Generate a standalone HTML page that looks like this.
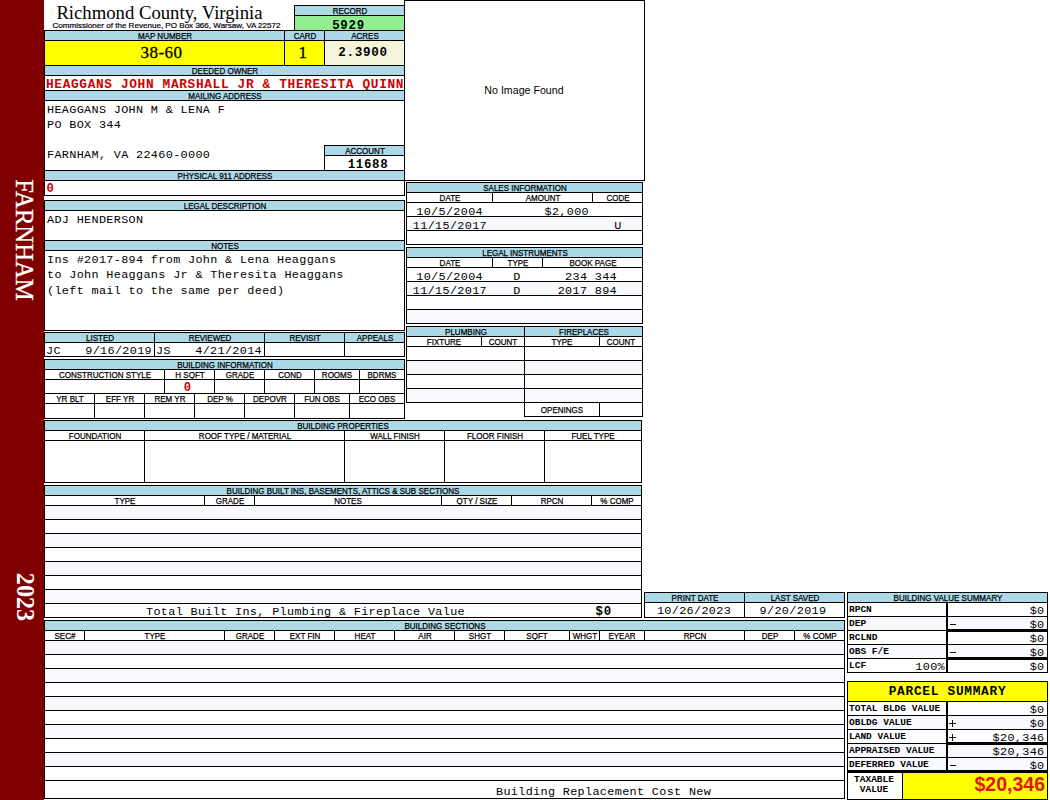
<!DOCTYPE html>
<html><head><meta charset="utf-8"><title>Richmond County Property Record</title>
<style>
html,body{margin:0;padding:0;}
body{width:1050px;height:800px;position:relative;overflow:hidden;background:#fff;font-family:"Liberation Sans",sans-serif;}
.b{position:absolute;box-sizing:border-box;border:1px solid #000;}
.f{position:absolute;}
.t{position:absolute;line-height:normal;white-space:pre;color:#000;}
.lab{font-family:"Liberation Sans",sans-serif;font-size:9px;transform:scaleX(0.89);-webkit-text-stroke:0.25px #000;}
.m{font-family:"Liberation Mono",monospace;font-size:11.8px;letter-spacing:0.34px;}
.mb{font-family:"Liberation Mono",monospace;font-size:12.4px;letter-spacing:0.7px;font-weight:bold;}
.mb2{font-family:"Liberation Mono",monospace;font-size:12.6px;letter-spacing:0.7px;font-weight:bold;}
.mb12{font-family:"Liberation Mono",monospace;font-size:12.4px;letter-spacing:0.8px;font-weight:bold;}
.own{font-family:"Liberation Mono",monospace;font-size:12.8px;letter-spacing:0.65px;font-weight:bold;color:#cc0000;}
.red{font-family:"Liberation Mono",monospace;font-size:12.2px;font-weight:bold;color:#c00000;}
.sb{font-family:"Liberation Mono",monospace;font-size:9.5px;font-weight:bold;}
.ps{font-family:"Liberation Mono",monospace;font-size:12.8px;letter-spacing:0.72px;font-weight:bold;}
.big{font-family:"Liberation Serif",serif;font-size:17px;letter-spacing:0.5px;-webkit-text-stroke:0.3px #000;}
.title{font-family:"Liberation Serif",serif;font-size:18.7px;}
.sub{font-family:"Liberation Sans",sans-serif;font-size:8.07px;-webkit-text-stroke:0.2px #000;}
.noimg{font-family:"Liberation Sans",sans-serif;font-size:10.65px;}
.tax{font-family:"Liberation Sans",sans-serif;font-size:19.5px;font-weight:bold;color:#e41410;}
.side{position:absolute;width:0;height:0;}
.side span{position:absolute;left:0;top:0;white-space:pre;color:#fff;font-family:"Liberation Serif",serif;font-size:24.7px;line-height:24px;-webkit-text-stroke:0.3px #fff;transform:translate(-50%,-50%) rotate(90deg);}
</style></head>
<body>
<div class="f" style="left:0px;top:0px;width:44px;height:800px;background:#800000;"></div>
<div class="side" style="left:23.5px;top:240px;"><span>FARNHAM</span></div>
<div class="side" style="left:25px;top:596.5px;"><span style="font-weight:bold;font-size:24.2px;-webkit-text-stroke:0">2023</span></div>
<div class="t title" style="left:-40.5px;width:400px;text-align:center;top:2px;">Richmond County, Virginia</div>
<div class="t sub" style="left:-33.5px;width:400px;text-align:center;top:21px;">Commissioner of the Revenue, PO Box 366, Warsaw, VA 22572</div>
<div class="b" style="left:294px;top:5px;width:111px;height:11px;background:#add8e6;"></div>
<div class="t lab" style="left:149.5px;width:400px;text-align:center;top:6px;">RECORD</div>
<div class="b" style="left:294px;top:15px;width:111px;height:16px;background:#90ee90;"></div>
<div class="t mb" style="left:148.5px;width:400px;text-align:center;top:19px;">5929</div>
<div class="b" style="left:44px;top:30px;width:241px;height:11px;background:#add8e6;"></div>
<div class="t lab" style="left:-35.5px;width:400px;text-align:center;top:31px;">MAP NUMBER</div>
<div class="b" style="left:284px;top:30px;width:41px;height:11px;background:#add8e6;"></div>
<div class="t lab" style="left:104.5px;width:400px;text-align:center;top:31px;">CARD</div>
<div class="b" style="left:324px;top:30px;width:81px;height:11px;background:#add8e6;"></div>
<div class="t lab" style="left:164.5px;width:400px;text-align:center;top:31px;">ACRES</div>
<div class="b" style="left:44px;top:40px;width:241px;height:26px;background:#ffff00;"></div>
<div class="t big" style="left:-38.5px;width:400px;text-align:center;top:43px;">38-60</div>
<div class="b" style="left:284px;top:40px;width:41px;height:26px;background:#ffff00;"></div>
<div class="t big" style="left:103px;width:400px;text-align:center;top:43px;">1</div>
<div class="b" style="left:324px;top:40px;width:81px;height:26px;background:#f5f5dc;"></div>
<div class="t mb2" style="left:163px;width:400px;text-align:center;top:46px;">2.3900</div>
<div class="b" style="left:44px;top:65px;width:361px;height:11px;background:#add8e6;"></div>
<div class="t lab" style="left:24.5px;width:400px;text-align:center;top:66px;">DEEDED OWNER</div>
<div class="b" style="left:44px;top:75px;width:361px;height:16px;background:#ffffff;"></div>
<div class="t own" style="left:46px;top:77px;">HEAGGANS JOHN MARSHALL JR &amp; THERESITA QUINN</div>
<div class="b" style="left:44px;top:90px;width:361px;height:11px;background:#add8e6;"></div>
<div class="t lab" style="left:24.5px;width:400px;text-align:center;top:91px;">MAILING ADDRESS</div>
<div class="b" style="left:44px;top:100px;width:361px;height:71px;background:#ffffff;"></div>
<div class="t m" style="left:47px;top:103px;">HEAGGANS JOHN M &amp; LENA F</div>
<div class="t m" style="left:47px;top:118px;">PO BOX 344</div>
<div class="t m" style="left:47px;top:148px;">FARNHAM, VA 22460-0000</div>
<div class="b" style="left:324px;top:145px;width:81px;height:11px;background:#add8e6;"></div>
<div class="t lab" style="left:164.5px;width:400px;text-align:center;top:146px;">ACCOUNT</div>
<div class="b" style="left:324px;top:155px;width:81px;height:16px;background:#ffffff;"></div>
<div class="t mb" style="left:168px;width:400px;text-align:center;top:158px;">11688</div>
<div class="b" style="left:44px;top:170px;width:361px;height:11px;background:#add8e6;"></div>
<div class="t lab" style="left:24.5px;width:400px;text-align:center;top:171px;">PHYSICAL 911 ADDRESS</div>
<div class="b" style="left:44px;top:180px;width:361px;height:16px;background:#ffffff;"></div>
<div class="t red" style="left:46.5px;top:182px;">0</div>
<div class="b" style="left:44px;top:200px;width:361px;height:11px;background:#add8e6;"></div>
<div class="t lab" style="left:24.5px;width:400px;text-align:center;top:201px;">LEGAL DESCRIPTION</div>
<div class="b" style="left:44px;top:210px;width:361px;height:31px;background:#ffffff;"></div>
<div class="t m" style="left:47px;top:213px;">ADJ HENDERSON</div>
<div class="b" style="left:44px;top:240px;width:361px;height:11px;background:#add8e6;"></div>
<div class="t lab" style="left:24.5px;width:400px;text-align:center;top:241px;">NOTES</div>
<div class="b" style="left:44px;top:250px;width:361px;height:81px;background:#ffffff;"></div>
<div class="t m" style="left:47px;top:253px;">Ins #2017-894 from John &amp; Lena Heaggans</div>
<div class="t m" style="left:47px;top:268px;">to John Heaggans Jr &amp; Theresita Heaggans</div>
<div class="t m" style="left:47px;top:284px;">(left mail to the same per deed)</div>
<div class="b" style="left:44px;top:332px;width:111px;height:11px;background:#add8e6;"></div>
<div class="t lab" style="left:-100.5px;width:400px;text-align:center;top:333px;">LISTED</div>
<div class="b" style="left:44px;top:342px;width:111px;height:15px;background:#ffffff;"></div>
<div class="b" style="left:154px;top:332px;width:111px;height:11px;background:#add8e6;"></div>
<div class="t lab" style="left:9.5px;width:400px;text-align:center;top:333px;">REVIEWED</div>
<div class="b" style="left:154px;top:342px;width:111px;height:15px;background:#ffffff;"></div>
<div class="b" style="left:264px;top:332px;width:81px;height:11px;background:#add8e6;"></div>
<div class="t lab" style="left:104.5px;width:400px;text-align:center;top:333px;">REVISIT</div>
<div class="b" style="left:264px;top:342px;width:81px;height:15px;background:#ffffff;"></div>
<div class="b" style="left:344px;top:332px;width:61px;height:11px;background:#add8e6;"></div>
<div class="t lab" style="left:174.5px;width:400px;text-align:center;top:333px;">APPEALS</div>
<div class="b" style="left:344px;top:342px;width:61px;height:15px;background:#ffffff;"></div>
<div class="t m" style="left:46px;top:344px;">JC</div>
<div class="t m" style="left:-248px;width:400px;text-align:right;top:344px;">9/16/2019</div>
<div class="t m" style="left:156px;top:344px;">JS</div>
<div class="t m" style="left:-138px;width:400px;text-align:right;top:344px;">4/21/2014</div>
<div class="b" style="left:44px;top:359px;width:361px;height:11px;background:#add8e6;"></div>
<div class="t lab" style="left:24.5px;width:400px;text-align:center;top:360px;">BUILDING INFORMATION</div>
<div class="b" style="left:44px;top:369px;width:121px;height:11px;background:#ffffff;"></div>
<div class="t lab" style="left:-95.5px;width:400px;text-align:center;top:370px;">CONSTRUCTION STYLE</div>
<div class="b" style="left:44px;top:379px;width:121px;height:15px;background:#ffffff;"></div>
<div class="b" style="left:164px;top:369px;width:51px;height:11px;background:#ffffff;"></div>
<div class="t lab" style="left:-10.5px;width:400px;text-align:center;top:370px;">H SQFT</div>
<div class="b" style="left:164px;top:379px;width:51px;height:15px;background:#ffffff;"></div>
<div class="b" style="left:214px;top:369px;width:51px;height:11px;background:#ffffff;"></div>
<div class="t lab" style="left:39.5px;width:400px;text-align:center;top:370px;">GRADE</div>
<div class="b" style="left:214px;top:379px;width:51px;height:15px;background:#ffffff;"></div>
<div class="b" style="left:264px;top:369px;width:51px;height:11px;background:#ffffff;"></div>
<div class="t lab" style="left:89.5px;width:400px;text-align:center;top:370px;">COND</div>
<div class="b" style="left:264px;top:379px;width:51px;height:15px;background:#ffffff;"></div>
<div class="b" style="left:314px;top:369px;width:46px;height:11px;background:#ffffff;"></div>
<div class="t lab" style="left:137.0px;width:400px;text-align:center;top:370px;">ROOMS</div>
<div class="b" style="left:314px;top:379px;width:46px;height:15px;background:#ffffff;"></div>
<div class="b" style="left:359px;top:369px;width:46px;height:11px;background:#ffffff;"></div>
<div class="t lab" style="left:182.0px;width:400px;text-align:center;top:370px;">BDRMS</div>
<div class="b" style="left:359px;top:379px;width:46px;height:15px;background:#ffffff;"></div>
<div class="t red" style="left:-12.5px;width:400px;text-align:center;top:381px;">0</div>
<div class="b" style="left:44px;top:393px;width:51px;height:11px;background:#ffffff;"></div>
<div class="t lab" style="left:-130.5px;width:400px;text-align:center;top:394px;">YR BLT</div>
<div class="b" style="left:44px;top:403px;width:51px;height:16px;background:#ffffff;"></div>
<div class="b" style="left:94px;top:393px;width:51px;height:11px;background:#ffffff;"></div>
<div class="t lab" style="left:-80.5px;width:400px;text-align:center;top:394px;">EFF YR</div>
<div class="b" style="left:94px;top:403px;width:51px;height:16px;background:#ffffff;"></div>
<div class="b" style="left:144px;top:393px;width:51px;height:11px;background:#ffffff;"></div>
<div class="t lab" style="left:-30.5px;width:400px;text-align:center;top:394px;">REM YR</div>
<div class="b" style="left:144px;top:403px;width:51px;height:16px;background:#ffffff;"></div>
<div class="b" style="left:194px;top:393px;width:51px;height:11px;background:#ffffff;"></div>
<div class="t lab" style="left:19.5px;width:400px;text-align:center;top:394px;">DEP %</div>
<div class="b" style="left:194px;top:403px;width:51px;height:16px;background:#ffffff;"></div>
<div class="b" style="left:244px;top:393px;width:51px;height:11px;background:#ffffff;"></div>
<div class="t lab" style="left:69.5px;width:400px;text-align:center;top:394px;">DEPOVR</div>
<div class="b" style="left:244px;top:403px;width:51px;height:16px;background:#ffffff;"></div>
<div class="b" style="left:294px;top:393px;width:56px;height:11px;background:#ffffff;"></div>
<div class="t lab" style="left:122.0px;width:400px;text-align:center;top:394px;">FUN OBS</div>
<div class="b" style="left:294px;top:403px;width:56px;height:16px;background:#ffffff;"></div>
<div class="b" style="left:349px;top:393px;width:56px;height:11px;background:#ffffff;"></div>
<div class="t lab" style="left:177.0px;width:400px;text-align:center;top:394px;">ECO OBS</div>
<div class="b" style="left:349px;top:403px;width:56px;height:16px;background:#ffffff;"></div>
<div class="b" style="left:44px;top:420px;width:598px;height:11px;background:#add8e6;"></div>
<div class="t lab" style="left:143.0px;width:400px;text-align:center;top:421px;">BUILDING PROPERTIES</div>
<div class="b" style="left:44px;top:430px;width:101px;height:11px;background:#ffffff;"></div>
<div class="t lab" style="left:-105.5px;width:400px;text-align:center;top:431px;">FOUNDATION</div>
<div class="b" style="left:44px;top:440px;width:101px;height:43px;background:#ffffff;"></div>
<div class="b" style="left:144px;top:430px;width:201px;height:11px;background:#ffffff;"></div>
<div class="t lab" style="left:44.5px;width:400px;text-align:center;top:431px;">ROOF TYPE / MATERIAL</div>
<div class="b" style="left:144px;top:440px;width:201px;height:43px;background:#ffffff;"></div>
<div class="b" style="left:344px;top:430px;width:101px;height:11px;background:#ffffff;"></div>
<div class="t lab" style="left:194.5px;width:400px;text-align:center;top:431px;">WALL FINISH</div>
<div class="b" style="left:344px;top:440px;width:101px;height:43px;background:#ffffff;"></div>
<div class="b" style="left:444px;top:430px;width:101px;height:11px;background:#ffffff;"></div>
<div class="t lab" style="left:294.5px;width:400px;text-align:center;top:431px;">FLOOR FINISH</div>
<div class="b" style="left:444px;top:440px;width:101px;height:43px;background:#ffffff;"></div>
<div class="b" style="left:544px;top:430px;width:98px;height:11px;background:#ffffff;"></div>
<div class="t lab" style="left:393.0px;width:400px;text-align:center;top:431px;">FUEL TYPE</div>
<div class="b" style="left:544px;top:440px;width:98px;height:43px;background:#ffffff;"></div>
<div class="b" style="left:44px;top:485px;width:598px;height:11px;background:#add8e6;"></div>
<div class="t lab" style="left:143.0px;width:400px;text-align:center;top:486px;">BUILDING BUILT INS, BASEMENTS, ATTICS &amp; SUB SECTIONS</div>
<div class="b" style="left:44px;top:495px;width:161px;height:11px;background:#ffffff;"></div>
<div class="t lab" style="left:-75.5px;width:400px;text-align:center;top:496px;">TYPE</div>
<div class="b" style="left:204px;top:495px;width:51px;height:11px;background:#ffffff;"></div>
<div class="t lab" style="left:29.5px;width:400px;text-align:center;top:496px;">GRADE</div>
<div class="b" style="left:254px;top:495px;width:188px;height:11px;background:#ffffff;"></div>
<div class="t lab" style="left:148.0px;width:400px;text-align:center;top:496px;">NOTES</div>
<div class="b" style="left:441px;top:495px;width:71px;height:11px;background:#ffffff;"></div>
<div class="t lab" style="left:276.5px;width:400px;text-align:center;top:496px;">QTY / SIZE</div>
<div class="b" style="left:511px;top:495px;width:81px;height:11px;background:#ffffff;"></div>
<div class="t lab" style="left:351.5px;width:400px;text-align:center;top:496px;">RPCN</div>
<div class="b" style="left:591px;top:495px;width:51px;height:11px;background:#ffffff;"></div>
<div class="t lab" style="left:416.5px;width:400px;text-align:center;top:496px;">% COMP</div>
<div class="b" style="left:44px;top:505px;width:598px;height:15px;background:#f8f8ff;"></div>
<div class="b" style="left:44px;top:519px;width:598px;height:15px;background:#ffffff;"></div>
<div class="b" style="left:44px;top:533px;width:598px;height:15px;background:#f8f8ff;"></div>
<div class="b" style="left:44px;top:547px;width:598px;height:15px;background:#ffffff;"></div>
<div class="b" style="left:44px;top:561px;width:598px;height:15px;background:#f8f8ff;"></div>
<div class="b" style="left:44px;top:575px;width:598px;height:15px;background:#ffffff;"></div>
<div class="b" style="left:44px;top:589px;width:598px;height:15px;background:#f8f8ff;"></div>
<div class="b" style="left:44px;top:603px;width:598px;height:15px;background:#ffffff;"></div>
<div class="t m" style="left:146px;top:605px;">Total Built Ins, Plumbing &amp; Fireplace Value</div>
<div class="t mb12" style="left:595.5px;top:605px;">$0</div>
<div class="b" style="left:44px;top:620px;width:801px;height:11px;background:#add8e6;"></div>
<div class="t lab" style="left:244.5px;width:400px;text-align:center;top:621px;">BUILDING SECTIONS</div>
<div class="b" style="left:44px;top:630px;width:41px;height:11px;background:#ffffff;"></div>
<div class="t lab" style="left:-135.5px;width:400px;text-align:center;top:631px;">SEC#</div>
<div class="b" style="left:84px;top:630px;width:141px;height:11px;background:#ffffff;"></div>
<div class="t lab" style="left:-45.5px;width:400px;text-align:center;top:631px;">TYPE</div>
<div class="b" style="left:224px;top:630px;width:51px;height:11px;background:#ffffff;"></div>
<div class="t lab" style="left:49.5px;width:400px;text-align:center;top:631px;">GRADE</div>
<div class="b" style="left:274px;top:630px;width:61px;height:11px;background:#ffffff;"></div>
<div class="t lab" style="left:104.5px;width:400px;text-align:center;top:631px;">EXT FIN</div>
<div class="b" style="left:334px;top:630px;width:61px;height:11px;background:#ffffff;"></div>
<div class="t lab" style="left:164.5px;width:400px;text-align:center;top:631px;">HEAT</div>
<div class="b" style="left:394px;top:630px;width:61px;height:11px;background:#ffffff;"></div>
<div class="t lab" style="left:224.5px;width:400px;text-align:center;top:631px;">AIR</div>
<div class="b" style="left:454px;top:630px;width:51px;height:11px;background:#ffffff;"></div>
<div class="t lab" style="left:279.5px;width:400px;text-align:center;top:631px;">SHGT</div>
<div class="b" style="left:504px;top:630px;width:66px;height:11px;background:#ffffff;"></div>
<div class="t lab" style="left:337.0px;width:400px;text-align:center;top:631px;">SQFT</div>
<div class="b" style="left:569px;top:630px;width:31px;height:11px;background:#ffffff;"></div>
<div class="t lab" style="left:384.5px;width:400px;text-align:center;top:631px;">WHGT</div>
<div class="b" style="left:599px;top:630px;width:46px;height:11px;background:#ffffff;"></div>
<div class="t lab" style="left:422.0px;width:400px;text-align:center;top:631px;">EYEAR</div>
<div class="b" style="left:644px;top:630px;width:101px;height:11px;background:#ffffff;"></div>
<div class="t lab" style="left:494.5px;width:400px;text-align:center;top:631px;">RPCN</div>
<div class="b" style="left:744px;top:630px;width:51px;height:11px;background:#ffffff;"></div>
<div class="t lab" style="left:569.5px;width:400px;text-align:center;top:631px;">DEP</div>
<div class="b" style="left:794px;top:630px;width:51px;height:11px;background:#ffffff;"></div>
<div class="t lab" style="left:619.5px;width:400px;text-align:center;top:631px;">% COMP</div>
<div class="b" style="left:44px;top:640px;width:801px;height:15px;background:#f8f8ff;"></div>
<div class="b" style="left:44px;top:654px;width:801px;height:15px;background:#ffffff;"></div>
<div class="b" style="left:44px;top:668px;width:801px;height:15px;background:#f8f8ff;"></div>
<div class="b" style="left:44px;top:682px;width:801px;height:15px;background:#ffffff;"></div>
<div class="b" style="left:44px;top:696px;width:801px;height:15px;background:#f8f8ff;"></div>
<div class="b" style="left:44px;top:710px;width:801px;height:15px;background:#ffffff;"></div>
<div class="b" style="left:44px;top:724px;width:801px;height:15px;background:#f8f8ff;"></div>
<div class="b" style="left:44px;top:738px;width:801px;height:15px;background:#ffffff;"></div>
<div class="b" style="left:44px;top:752px;width:801px;height:15px;background:#f8f8ff;"></div>
<div class="b" style="left:44px;top:766px;width:801px;height:15px;background:#ffffff;"></div>
<div class="b" style="left:44px;top:780px;width:801px;height:19px;background:#ffffff;"></div>
<div class="t m" style="left:496px;top:785px;">Building Replacement Cost New</div>
<div class="b" style="left:404px;top:0px;width:241px;height:181px;background:#ffffff;"></div>
<div class="t noimg" style="left:324px;width:400px;text-align:center;top:84px;">No Image Found</div>
<div class="b" style="left:406px;top:182px;width:237px;height:11px;background:#add8e6;"></div>
<div class="t lab" style="left:324.5px;width:400px;text-align:center;top:183px;">SALES INFORMATION</div>
<div class="b" style="left:406px;top:192px;width:87px;height:11px;background:#ffffff;"></div>
<div class="t lab" style="left:249.5px;width:400px;text-align:center;top:193px;">DATE</div>
<div class="b" style="left:492px;top:192px;width:101px;height:11px;background:#ffffff;"></div>
<div class="t lab" style="left:342.5px;width:400px;text-align:center;top:193px;">AMOUNT</div>
<div class="b" style="left:592px;top:192px;width:51px;height:11px;background:#ffffff;"></div>
<div class="t lab" style="left:417.5px;width:400px;text-align:center;top:193px;">CODE</div>
<div class="b" style="left:406px;top:202px;width:237px;height:15px;background:#ffffff;"></div>
<div class="b" style="left:406px;top:216px;width:237px;height:15px;background:#f8f8ff;"></div>
<div class="b" style="left:406px;top:230px;width:237px;height:15px;background:#ffffff;"></div>
<div class="t m" style="left:83px;width:400px;text-align:right;top:205px;">10/5/2004</div>
<div class="t m" style="left:189px;width:400px;text-align:right;top:205px;">$2,000</div>
<div class="t m" style="left:87px;width:400px;text-align:right;top:219px;">11/15/2017</div>
<div class="t m" style="left:418px;width:400px;text-align:center;top:219px;">U</div>
<div class="b" style="left:406px;top:247px;width:237px;height:11px;background:#add8e6;"></div>
<div class="t lab" style="left:324.5px;width:400px;text-align:center;top:248px;">LEGAL INSTRUMENTS</div>
<div class="b" style="left:406px;top:257px;width:87px;height:11px;background:#ffffff;"></div>
<div class="t lab" style="left:249.5px;width:400px;text-align:center;top:258px;">DATE</div>
<div class="b" style="left:492px;top:257px;width:51px;height:11px;background:#ffffff;"></div>
<div class="t lab" style="left:317.5px;width:400px;text-align:center;top:258px;">TYPE</div>
<div class="b" style="left:542px;top:257px;width:101px;height:11px;background:#ffffff;"></div>
<div class="t lab" style="left:392.5px;width:400px;text-align:center;top:258px;">BOOK PAGE</div>
<div class="b" style="left:406px;top:267px;width:237px;height:15px;background:#ffffff;"></div>
<div class="b" style="left:406px;top:281px;width:237px;height:15px;background:#f8f8ff;"></div>
<div class="b" style="left:406px;top:295px;width:237px;height:15px;background:#ffffff;"></div>
<div class="b" style="left:406px;top:309px;width:237px;height:15px;background:#f8f8ff;"></div>
<div class="t m" style="left:83px;width:400px;text-align:right;top:270px;">10/5/2004</div>
<div class="t m" style="left:317px;width:400px;text-align:center;top:270px;">D</div>
<div class="t m" style="left:217px;width:400px;text-align:right;top:270px;"> 234 344</div>
<div class="t m" style="left:87px;width:400px;text-align:right;top:284px;">11/15/2017</div>
<div class="t m" style="left:317px;width:400px;text-align:center;top:284px;">D</div>
<div class="t m" style="left:217px;width:400px;text-align:right;top:284px;">2017 894</div>
<div class="b" style="left:406px;top:326px;width:119px;height:11px;background:#add8e6;"></div>
<div class="t lab" style="left:265.5px;width:400px;text-align:center;top:327px;">PLUMBING</div>
<div class="b" style="left:524px;top:326px;width:119px;height:11px;background:#add8e6;"></div>
<div class="t lab" style="left:383.5px;width:400px;text-align:center;top:327px;">FIREPLACES</div>
<div class="b" style="left:406px;top:336px;width:76px;height:11px;background:#ffffff;"></div>
<div class="t lab" style="left:244.0px;width:400px;text-align:center;top:337px;">FIXTURE</div>
<div class="b" style="left:481px;top:336px;width:44px;height:11px;background:#ffffff;"></div>
<div class="t lab" style="left:303.0px;width:400px;text-align:center;top:337px;">COUNT</div>
<div class="b" style="left:524px;top:336px;width:76px;height:11px;background:#ffffff;"></div>
<div class="t lab" style="left:362.0px;width:400px;text-align:center;top:337px;">TYPE</div>
<div class="b" style="left:599px;top:336px;width:44px;height:11px;background:#ffffff;"></div>
<div class="t lab" style="left:421.0px;width:400px;text-align:center;top:337px;">COUNT</div>
<div class="b" style="left:406px;top:346px;width:119px;height:15px;background:#ffffff;"></div>
<div class="b" style="left:524px;top:346px;width:119px;height:15px;background:#ffffff;"></div>
<div class="b" style="left:406px;top:360px;width:119px;height:15px;background:#f8f8ff;"></div>
<div class="b" style="left:524px;top:360px;width:119px;height:15px;background:#f8f8ff;"></div>
<div class="b" style="left:406px;top:374px;width:119px;height:15px;background:#ffffff;"></div>
<div class="b" style="left:524px;top:374px;width:119px;height:15px;background:#ffffff;"></div>
<div class="b" style="left:406px;top:388px;width:119px;height:15px;background:#f8f8ff;"></div>
<div class="b" style="left:524px;top:388px;width:119px;height:15px;background:#f8f8ff;"></div>
<div class="b" style="left:524px;top:402px;width:76px;height:15px;background:#ffffff;"></div>
<div class="t lab" style="left:361.5px;width:400px;text-align:center;top:405px;">OPENINGS</div>
<div class="b" style="left:599px;top:402px;width:44px;height:15px;background:#ffffff;"></div>
<div class="b" style="left:644px;top:592px;width:101px;height:11px;background:#add8e6;"></div>
<div class="t lab" style="left:494.5px;width:400px;text-align:center;top:593px;">PRINT DATE</div>
<div class="b" style="left:744px;top:592px;width:101px;height:11px;background:#add8e6;"></div>
<div class="t lab" style="left:594.5px;width:400px;text-align:center;top:593px;">LAST SAVED</div>
<div class="b" style="left:644px;top:602px;width:101px;height:16px;background:#ffffff;"></div>
<div class="t m" style="left:494px;width:400px;text-align:center;top:604px;">10/26/2023</div>
<div class="b" style="left:744px;top:602px;width:101px;height:16px;background:#ffffff;"></div>
<div class="t m" style="left:593px;width:400px;text-align:center;top:604px;">9/20/2019</div>
<div class="b" style="left:847px;top:592px;width:201px;height:11px;background:#add8e6;"></div>
<div class="t lab" style="left:747.5px;width:400px;text-align:center;top:593px;">BUILDING VALUE SUMMARY</div>
<div class="b" style="left:847px;top:602px;width:101px;height:15px;background:#ffffff;"></div>
<div class="b" style="left:947px;top:602px;width:101px;height:15px;background:#ffffff;"></div>
<div class="t sb" style="left:849px;top:604px;">RPCN</div>
<div class="t m" style="left:644.5px;width:400px;text-align:right;top:604px;">$0</div>
<div class="b" style="left:847px;top:616px;width:101px;height:15px;background:#f8f8ff;"></div>
<div class="b" style="left:947px;top:616px;width:101px;height:15px;background:#f8f8ff;"></div>
<div class="t sb" style="left:849px;top:618px;">DEP</div>
<div class="f" style="left:950px;top:624px;width:6px;height:1px;background:#111;"></div>
<div class="t m" style="left:644.5px;width:400px;text-align:right;top:618px;">$0</div>
<div class="b" style="left:847px;top:630px;width:101px;height:15px;background:#ffffff;"></div>
<div class="b" style="left:947px;top:630px;width:101px;height:15px;background:#ffffff;"></div>
<div class="t sb" style="left:849px;top:632px;">RCLND</div>
<div class="t m" style="left:644.5px;width:400px;text-align:right;top:632px;">$0</div>
<div class="b" style="left:847px;top:644px;width:101px;height:15px;background:#f8f8ff;"></div>
<div class="b" style="left:947px;top:644px;width:101px;height:15px;background:#f8f8ff;"></div>
<div class="t sb" style="left:849px;top:646px;">OBS F/E</div>
<div class="f" style="left:950px;top:652px;width:6px;height:1px;background:#111;"></div>
<div class="t m" style="left:644.5px;width:400px;text-align:right;top:646px;">$0</div>
<div class="b" style="left:847px;top:658px;width:101px;height:15px;background:#ffffff;"></div>
<div class="b" style="left:947px;top:658px;width:101px;height:15px;background:#ffffff;"></div>
<div class="t sb" style="left:849px;top:660px;">LCF</div>
<div class="t m" style="left:644.5px;width:400px;text-align:right;top:660px;">$0</div>
<div class="t m" style="left:545px;width:400px;text-align:right;top:660px;">100%</div>
<div class="f" style="left:946px;top:602px;width:2px;height:71px;background:#000000;"></div>
<div class="f" style="left:947px;top:629px;width:101px;height:3px;background:#000000;"></div>
<div class="f" style="left:947px;top:657px;width:101px;height:3px;background:#000000;"></div>
<div class="b" style="left:847px;top:681px;width:201px;height:21px;background:#ffff00;"></div>
<div class="t ps" style="left:747.5px;width:400px;text-align:center;top:684px;">PARCEL SUMMARY</div>
<div class="b" style="left:847px;top:701px;width:101px;height:15px;background:#ffffff;"></div>
<div class="b" style="left:947px;top:701px;width:101px;height:15px;background:#ffffff;"></div>
<div class="t sb" style="left:849px;top:703px;">TOTAL BLDG VALUE</div>
<div class="t m" style="left:644.5px;width:400px;text-align:right;top:703px;">$0</div>
<div class="b" style="left:847px;top:715px;width:101px;height:15px;background:#f8f8ff;"></div>
<div class="b" style="left:947px;top:715px;width:101px;height:15px;background:#f8f8ff;"></div>
<div class="t sb" style="left:849px;top:717px;">OBLDG VALUE</div>
<div class="f" style="left:949px;top:723px;width:7px;height:1px;background:#111;"></div>
<div class="f" style="left:952px;top:720px;width:1px;height:7px;background:#111;"></div>
<div class="t m" style="left:644.5px;width:400px;text-align:right;top:717px;">$0</div>
<div class="b" style="left:847px;top:729px;width:101px;height:15px;background:#ffffff;"></div>
<div class="b" style="left:947px;top:729px;width:101px;height:15px;background:#ffffff;"></div>
<div class="t sb" style="left:849px;top:731px;">LAND VALUE</div>
<div class="f" style="left:949px;top:737px;width:7px;height:1px;background:#111;"></div>
<div class="f" style="left:952px;top:734px;width:1px;height:7px;background:#111;"></div>
<div class="t m" style="left:644.5px;width:400px;text-align:right;top:731px;">$20,346</div>
<div class="b" style="left:847px;top:743px;width:101px;height:15px;background:#f8f8ff;"></div>
<div class="b" style="left:947px;top:743px;width:101px;height:15px;background:#f8f8ff;"></div>
<div class="t sb" style="left:849px;top:745px;">APPRAISED VALUE</div>
<div class="t m" style="left:644.5px;width:400px;text-align:right;top:745px;">$20,346</div>
<div class="b" style="left:847px;top:757px;width:101px;height:15px;background:#f8f8ff;"></div>
<div class="b" style="left:947px;top:757px;width:101px;height:15px;background:#f8f8ff;"></div>
<div class="t sb" style="left:849px;top:759px;">DEFERRED VALUE</div>
<div class="f" style="left:950px;top:765px;width:6px;height:1px;background:#111;"></div>
<div class="t m" style="left:644.5px;width:400px;text-align:right;top:759px;">$0</div>
<div class="f" style="left:946px;top:701px;width:2px;height:71px;background:#000000;"></div>
<div class="f" style="left:947px;top:742px;width:101px;height:3px;background:#000000;"></div>
<div class="f" style="left:847px;top:770px;width:201px;height:3px;background:#000000;"></div>
<div class="b" style="left:847px;top:772px;width:56px;height:28px;background:#ffffff;"></div>
<div class="b" style="left:902px;top:772px;width:146px;height:28px;background:#ffff00;"></div>
<div class="t sb" style="left:674px;width:400px;text-align:center;top:774px;">TAXABLE</div>
<div class="t sb" style="left:674px;width:400px;text-align:center;top:784px;">VALUE</div>
<div class="t tax" style="left:645px;width:400px;text-align:right;top:773px;">$20,346</div>
</body></html>
